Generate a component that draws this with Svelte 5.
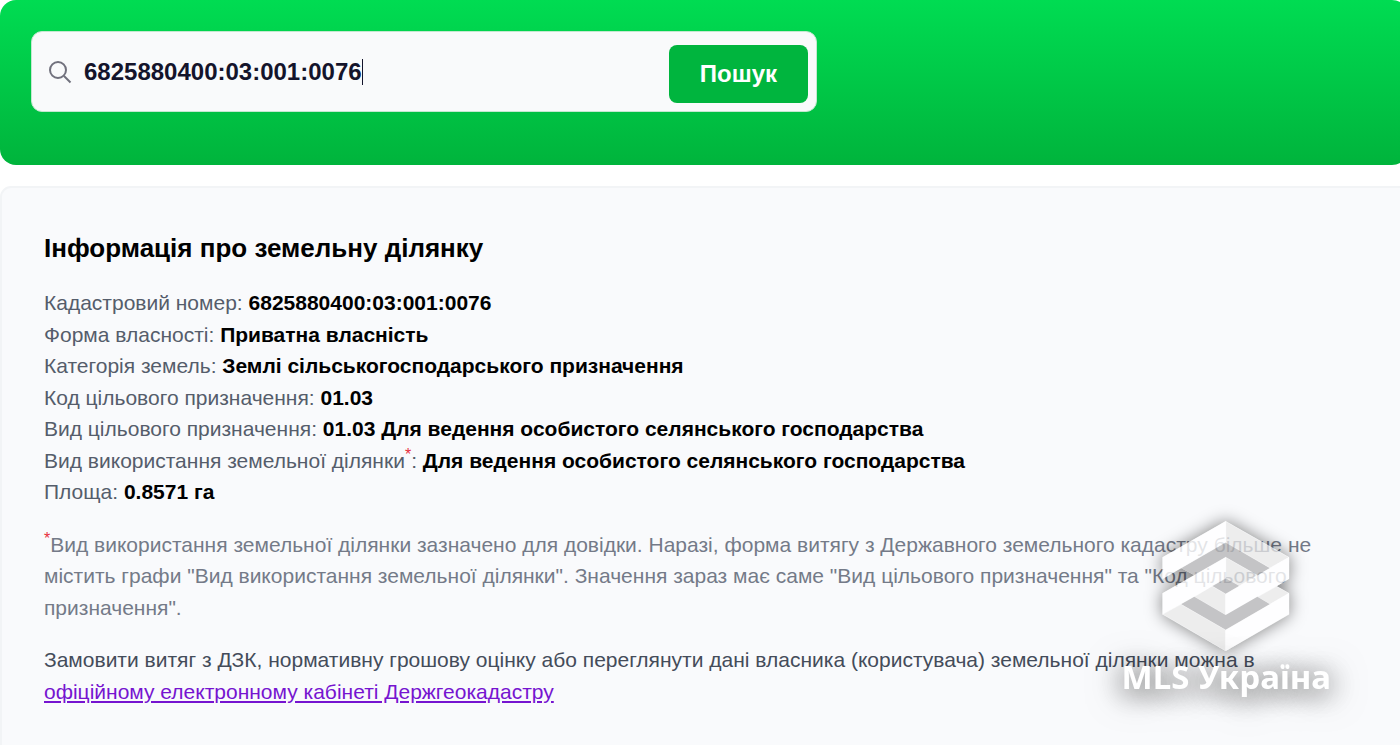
<script lang="ts">
	interface Field {
		label: string;
		value: string;
		note?: boolean;
	}

	let query = $state('6825880400:03:001:0076');

	const fields: Field[] = [
		{ label: 'Кадастровий номер', value: '6825880400:03:001:0076' },
		{ label: 'Форма власності', value: 'Приватна власність' },
		{ label: 'Категорія земель', value: 'Землі сільськогосподарського призначення' },
		{ label: 'Код цільового призначення', value: '01.03' },
		{ label: 'Вид цільового призначення', value: '01.03 Для ведення особистого селянського господарства' },
		{ label: 'Вид використання земельної ділянки', value: 'Для ведення особистого селянського господарства', note: true },
		{ label: 'Площа', value: '0.8571 га' }
	];

	// Outer outline of the logo, used for its shadow
	const outline = 'M257 34 L447 142 V206 L410 229 L447 250 V313 L257 423 L68 313 V250 L163 196 L123 174 L68 206 V142 Z';

	function handleSubmit(event: Event) {
		event.preventDefault();
	}
</script>

<div class="page">
	<header class="hero">
		<form class="search" onsubmit={handleSubmit}>
			<label class="field">
				<svg class="search-icon" viewBox="0 0 24 24" aria-label="Кадастровий номер">
					<circle cx="10" cy="10" r="8" />
					<path d="M16 16 L22.5 22.5" />
				</svg>
				<input type="text" bind:value={query} autocomplete="off" />
				<span class="caret"></span>
			</label>
			<button type="submit">Пошук</button>
		</form>
	</header>

	<main class="card">
		<h2>Інформація про земельну ділянку</h2>

		<ul class="fields">
			{#each fields as field}
				<li>{field.label}{#if field.note}<sup>*</sup>{/if}: <strong>{field.value}</strong></li>
			{/each}
		</ul>

		<p class="footnote">
			<sup>*</sup>Вид використання земельної ділянки зазначено для довідки. Наразі, форма витягу з Державного земельного кадастру більше не містить графи "Вид використання земельної ділянки". Значення зараз має саме "Вид цільового призначення" та "Код цільового призначення".
		</p>

		<p class="order">
			Замовити витяг з ДЗК, нормативну грошову оцінку або переглянути дані власника (користувача) земельної ділянки можна в
			<a href="#cabinet">офіційному електронному кабінеті Держгеокадастру</a>
		</p>
	</main>

	<div class="watermark">
		<svg viewBox="60 24 396 408" aria-hidden="true">
			<defs>
				<filter id="soft" x="-40%" y="-40%" width="180%" height="180%">
					<feGaussianBlur stdDeviation="26" />
				</filter>
				<mask id="outside" maskUnits="userSpaceOnUse" x="-100" y="-100" width="720" height="680">
					<rect x="-100" y="-100" width="720" height="680" fill="#fff" />
					<path d={outline} fill="#000" />
				</mask>
			</defs>
			<g mask="url(#outside)">
				<path class="shadow" d={outline} filter="url(#soft)" />
			</g>
			<!-- upper ring -->
			<path class="dark" d="M257 97 L390 174 L352 196 L257 142 L163 196 L123 174 Z" />
			<path class="light" d="M257 34 L447 142 L390 174 L257 97 Z" />
			<path class="white" d="M257 34 L68 142 L68 206 L257 97 Z" />
			<!-- middle fold -->
			<path class="light" d="M257 142 L352 196 L298 228 L257 205 Z" />
			<path class="dark" d="M257 205 L298 228 L257 252 L216 228 Z" />
			<path class="light" d="M216 228 L257 252 L257 315 L163 260 Z" />
			<path class="white" d="M257 142 L68 250 L68 313 L257 205 Z" />
			<path class="white" d="M447 142 L447 206 L257 315 L257 252 Z" />
			<!-- lower ring -->
			<path class="light" d="M410 229 L447 250 L390 283 L352 261 Z" />
			<path class="dark" d="M163 260 L257 315 L352 260 L390 283 L257 360 L123 283 Z" />
			<path class="light" d="M68 313 L123 283 L257 360 L257 423 Z" />
			<path class="white" d="M447 250 L447 313 L257 423 L257 360 Z" />
		</svg>
		<span>MLS Україна</span>
	</div>
</div>

<style>
	:global(body) {
		margin: 0;
		background: #fff;
	}

	.page {
		overflow: hidden;
		font-family: 'Liberation Sans', Arial, sans-serif;
		font-size: 21px;
		line-height: 1.5;
	}

	.hero {
		margin-right: -8px;
		padding: 31px 31px 53px;
		border-radius: 16px;
		background: linear-gradient(#00dc52, #00b43c);
	}

	.search {
		display: flex;
		align-items: center;
		box-sizing: border-box;
		max-width: 786px;
		padding: 13px 8px 8px 16px;
		border: 1px solid #c4e8d0;
		border-radius: 11px;
		background: #f9fafb;
	}

	.field {
		display: flex;
		flex: 1;
		align-items: center;
		padding-bottom: 4px;
		cursor: text;
	}

	.search-icon {
		width: 24px;
		height: 24px;
		margin-right: 12px;
		fill: none;
		stroke: #71717d;
		stroke-width: 2;
	}

	input {
		field-sizing: content;
		padding: 0;
		border: 0;
		outline: 0;
		background: none;
		color: #14142b;
		font: bold 24px 'Liberation Sans', Arial, sans-serif;
		caret-color: transparent;
	}

	.caret {
		width: 1px;
		height: 26px;
		background: #14142b;
	}

	button {
		height: 58px;
		padding: 0 31px;
		border: 0;
		border-radius: 8px;
		background: #00b53e;
		color: #fff;
		font: bold 24px 'Liberation Sans', Arial, sans-serif;
		cursor: pointer;
	}

	.card {
		margin-top: 21px;
		margin-right: -24px;
		padding: 42px 96px 42px 42px;
		border: 2px solid #f2f4f6;
		border-radius: 11px;
		background: #f9fafc;
		color: #555d6b;
	}

	h2 {
		margin: 0 0 21px;
		color: #000;
		font-size: 26px;
		line-height: 36px;
	}

	.fields {
		margin: 0 0 21px;
		padding: 0;
		list-style: none;
	}

	strong {
		color: #000;
	}

	sup {
		color: #e7303b;
		font-size: 16px;
		line-height: 0;
	}

	p {
		margin: 0 0 21px;
	}

	.footnote {
		color: #747a88;
	}

	.order {
		color: #444c5a;
	}

	a {
		color: #7614d0;
	}

	.watermark {
		position: fixed;
		right: 69px;
		bottom: 45px;
		display: flex;
		flex-direction: column;
		align-items: center;
		pointer-events: none;
	}

	.watermark svg {
		width: 132px;
		height: 136px;
		overflow: visible;
	}

	.watermark span {
		color: #fff;
		font: bold 33px/46px 'Noto Sans', sans-serif;
		text-shadow:
			0 4px 28px rgba(0, 0, 0, 0.6),
			0 4px 36px rgba(0, 0, 0, 0.5);
	}

	.shadow {
		fill: rgba(0, 0, 0, 0.5);
	}

	.white {
		fill: rgba(255, 255, 255, 0.8);
		stroke: #fff;
	}

	.light {
		fill: rgba(232, 232, 232, 0.75);
		stroke: #fff;
	}

	.dark {
		fill: rgba(182, 182, 184, 0.8);
	}
</style>
